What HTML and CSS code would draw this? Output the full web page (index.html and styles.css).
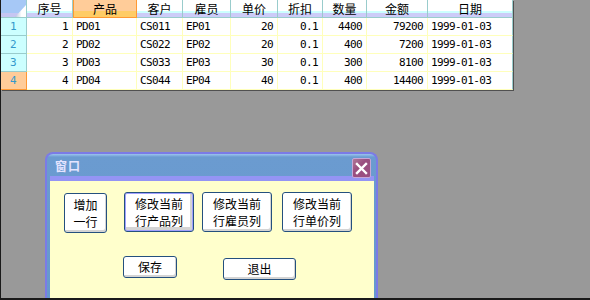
FILE: index.html
```html
<!DOCTYPE html>
<html lang="zh-CN">
<head>
    <meta charset="UTF-8">
    <title>窗口</title>
    <link rel="stylesheet" href="styles.css">
</head>
<body>
    <div class="screen">
        <div class="grid">
            <div class="corner">
                <svg width="26" height="18" viewBox="0 0 26 18">
                    <defs>
                        <linearGradient id="tri" x1="0" y1="0" x2="1" y2="0">
                            <stop offset="0" stop-color="#b8c4dc"/>
                            <stop offset="0.6" stop-color="#ffffff"/>
                        </linearGradient>
                    </defs>
                    <polygon points="14,17 25,5 25,17" fill="url(#tri)"/>
                </svg>
            </div>
            <div class="head">序号</div>
            <div class="head sel">产品</div>
            <div class="head">客户</div>
            <div class="head">雇员</div>
            <div class="head">单价</div>
            <div class="head">折扣</div>
            <div class="head">数量</div>
            <div class="head">金额</div>
            <div class="head">日期</div>

            <div class="rowhead">1</div>
            <div class="cell num">1</div>
            <div class="cell">PD01</div>
            <div class="cell">CS011</div>
            <div class="cell">EP01</div>
            <div class="cell num">20</div>
            <div class="cell num">0.1</div>
            <div class="cell num">4400</div>
            <div class="cell num">79200</div>
            <div class="cell">1999-01-03</div>

            <div class="rowhead">2</div>
            <div class="cell num">2</div>
            <div class="cell">PD02</div>
            <div class="cell">CS022</div>
            <div class="cell">EP02</div>
            <div class="cell num">20</div>
            <div class="cell num">0.1</div>
            <div class="cell num">400</div>
            <div class="cell num">7200</div>
            <div class="cell">1999-01-03</div>

            <div class="rowhead">3</div>
            <div class="cell num">3</div>
            <div class="cell">PD03</div>
            <div class="cell">CS033</div>
            <div class="cell">EP03</div>
            <div class="cell num">30</div>
            <div class="cell num">0.1</div>
            <div class="cell num">300</div>
            <div class="cell num">8100</div>
            <div class="cell">1999-01-03</div>

            <div class="rowhead sel">4</div>
            <div class="cell num">4</div>
            <div class="cell">PD04</div>
            <div class="cell">CS044</div>
            <div class="cell">EP04</div>
            <div class="cell num">40</div>
            <div class="cell num">0.1</div>
            <div class="cell num">400</div>
            <div class="cell num">14400</div>
            <div class="cell">1999-01-03</div>
        </div>

        <div class="dialog">
            <div class="title">
                <span class="caption">窗口</span>
                <span class="close">
                    <svg width="13" height="13" viewBox="0 0 13 13">
                        <path d="M2 2 L11 11 M11 2 L2 11" stroke="#ffffff" stroke-width="2.4" stroke-linecap="square"/>
                    </svg>
                </span>
            </div>
            <div class="panel">
                <div class="btn-row">
                    <button class="btn btn-add">增加<br>一行</button>
                    <button class="btn btn-wide btn-focus">修改当前<br>行产品列</button>
                    <button class="btn btn-wide btn-emp">修改当前<br>行雇员列</button>
                    <button class="btn btn-wide btn-price">修改当前<br>行单价列</button>
                </div>
                <div class="btn-row">
                    <button class="btn btn-save">保存</button>
                    <button class="btn btn-exit">退出</button>
                </div>
            </div>
        </div>
    </div>
</body>
</html>
```

FILE: styles.css
```css
body {
    margin: 0;
    padding: 0;
    background-color: #999999;
    font-family: "Noto Sans CJK SC", "Noto Sans", sans-serif;
}
.screen {
    width: 590px;
    height: 300px;
    box-sizing: border-box;
    border-left: 1px solid #1a1a1a;
    border-bottom: 2px solid #1a1a1a;
    background-color: #999999;
    overflow: hidden;
}

/* data grid */
.grid {
    display: grid;
    grid-template-columns: 26px 46px 64px 46px 48px 47px 45px 44px 61px 85px;
    grid-auto-rows: 18px;
    width: 512px;
    background: #fff;
    box-shadow: 1px 1px 0 #505050;
}
.grid > div {
    box-sizing: border-box;
    white-space: nowrap;
}
.corner {
    background: linear-gradient(#a6c8f6 0, #a6c8f6 13px, #c6c6f2 13px);
    border-right: 1px solid #99cccc;
    border-bottom: 1px solid #99cccc;
}
.corner svg {
    display: block;
}
.head {
    background: linear-gradient(#ffffff 0, #ffffff 11px, #ccffff 11px, #ccffff 13px, #ccccf8 13px);
    border-right: 1px solid #99cccc;
    border-bottom: 1px solid #99cccc;
    text-align: center;
    font-size: 12px;
    line-height: 17px;
    color: #000;
}
.head.sel {
    background: linear-gradient(#ffcc99 0, #ffcc99 11px, #ffcc66 11px);
    border-left: 1px solid #ff9933;
    border-right: 1px solid #ff9933;
    border-bottom: 1px solid #ff9933;
}
.rowhead {
    background: #ccffff;
    border-right: 1px solid #99cccc;
    border-bottom: 1px solid #99cccc;
    padding-left: 9px;
    color: #3399cc;
    font-family: "DejaVu Sans Mono", monospace;
    font-size: 11px;
    letter-spacing: -0.6px;
    line-height: 17px;
}
.rowhead.sel {
    background: #ffcc99;
    border-right: 1px solid #ff9933;
    border-bottom: 1px solid #ff9933;
}
.cell {
    background: #fff;
    border-right: 1px solid #ffffbb;
    border-bottom: 1px solid #ffffbb;
    padding-left: 3px;
    color: #000;
    font-family: "DejaVu Sans Mono", monospace;
    font-size: 11px;
    letter-spacing: -0.6px;
    line-height: 17px;
}
.cell.num {
    text-align: right;
    padding-left: 0;
    padding-right: 4px;
}
.grid > .cell:nth-child(10n) {
    border-right-color: #99cccc;
}

/* dialog */
.dialog {
    display: flex;
    flex-direction: column;
    width: 333px;
    height: 146px;
    box-sizing: border-box;
    margin: 62px 0 0 44px;
    border: 2px solid #7b7be6;
    border-bottom: none;
    border-radius: 8px 8px 0 0;
    padding: 0 2px 0 3px;
    background: linear-gradient(#9cc4ee 0, #6b9bd0 3px, #6699cc 100%);
}
.title {
    display: flex;
    justify-content: space-between;
    align-items: center;
    height: 27px;
    box-sizing: border-box;
    padding: 0 3px 0 5px;
    border-bottom: 5px solid #9494f4;
}
.caption {
    color: #e4e4ff;
    font-size: 12px;
    font-weight: bold;
    letter-spacing: 1px;
}
.close {
    display: flex;
    align-items: center;
    justify-content: center;
    align-self: flex-start;
    margin-top: 4px;
    width: 19px;
    height: 20px;
    box-sizing: border-box;
    border: 1px solid #c8a6d6;
    border-radius: 2px;
    background: linear-gradient(135deg, #b07898 0, #9a4f80 40%, #9a4f80 100%);
}
.close svg {
    display: block;
}
.panel {
    flex: 1;
    background: #ffffcc;
    padding: 11px 0 0 14px;
}
.btn-row {
    display: flex;
    align-items: flex-start;
}
.btn-row + .btn-row {
    margin-top: 23px;
    padding-left: 59px;
}
.btn {
    box-sizing: border-box;
    height: 40px;
    padding: 0;
    background: #fff;
    border: 1px solid #24507e;
    border-radius: 3px;
    box-shadow: inset -1px -2px 0 #d4d4d4, inset 1px 1px 0 #ffffff;
    font-family: "Noto Sans CJK SC", sans-serif;
    font-size: 12px;
    line-height: 17px;
    color: #000;
}
.btn-add {
    width: 43px;
    margin-top: 1px;
}
.btn-wide {
    width: 70px;
}
.btn-focus {
    margin-left: 17px;
    box-shadow: inset 0 0 0 1px #a0a0ff, inset -1px -2px 0 2px #d4d4d4;
}
.btn-emp {
    margin-left: 8px;
}
.btn-price {
    margin-left: 10px;
}
.btn-save {
    width: 54px;
    height: 22px;
    line-height: 18px;
}
.btn-exit {
    width: 73px;
    height: 22px;
    line-height: 18px;
    margin-left: 46px;
    margin-top: 2px;
}
```
